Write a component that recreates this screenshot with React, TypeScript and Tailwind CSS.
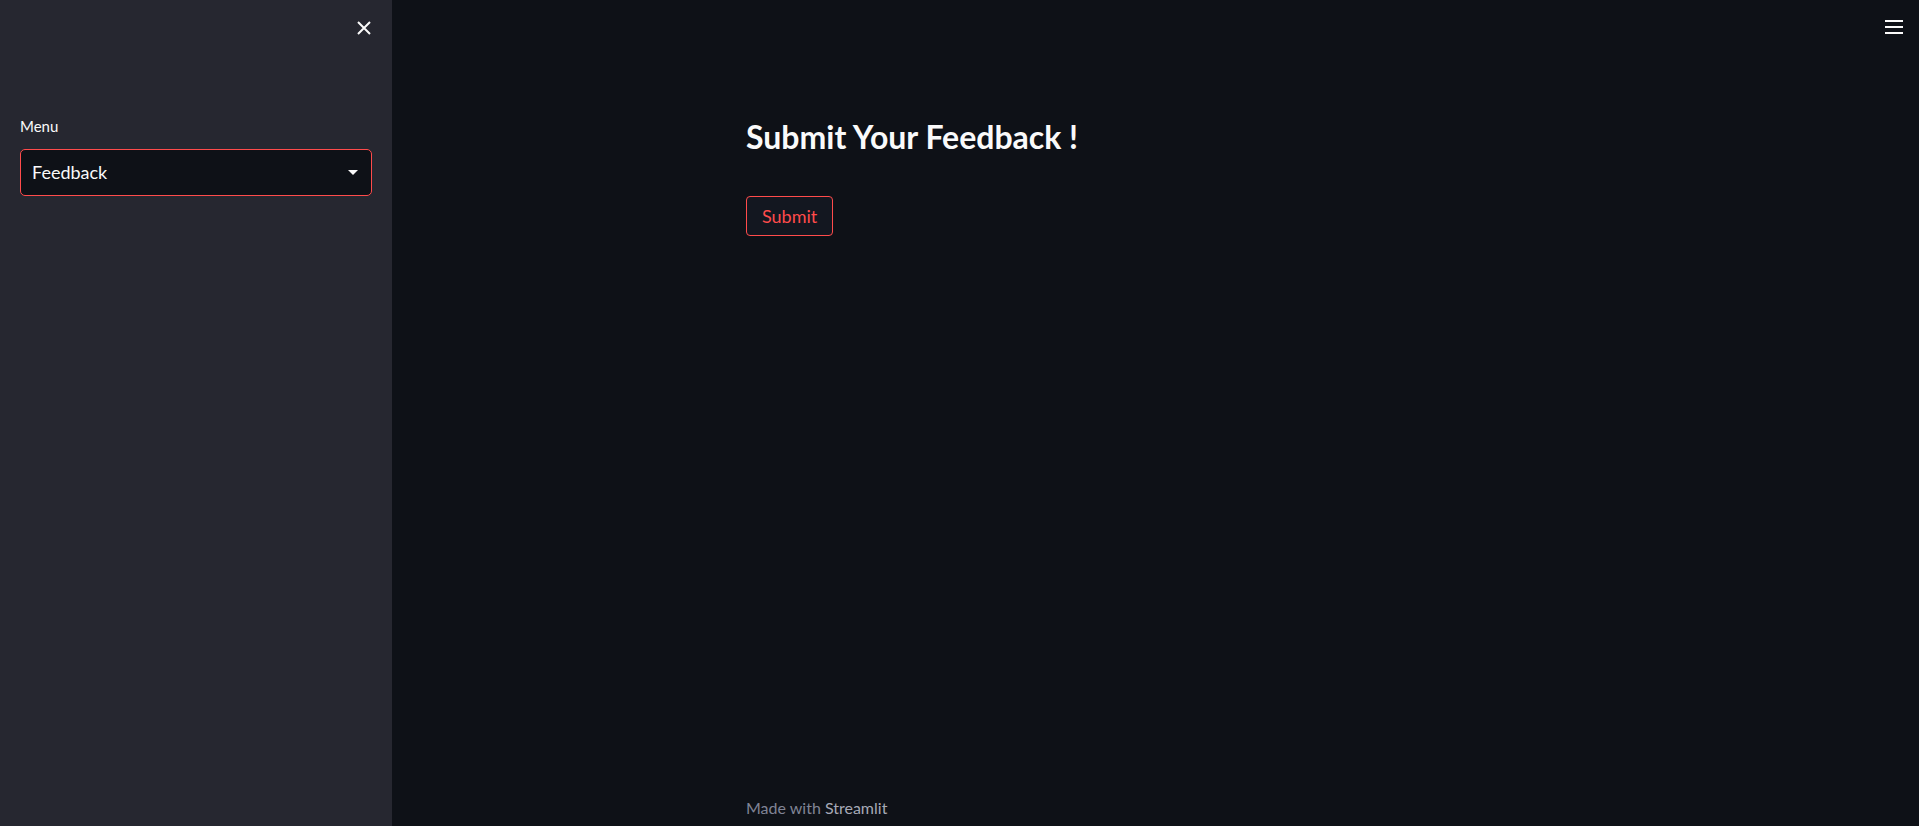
import React, { useState } from "react";

const font = { fontFamily: '"Lato", "Open Sans", sans-serif' };

const Sidebar = () => {
  const [page] = useState("Feedback");

  return (
    <aside className="w-[392px] shrink-0 h-full bg-[#262730] flex flex-col">
      <div className="flex justify-end pt-[21px] pr-[21px]">
        <button className="w-[14px] h-[14px] text-[#fafafa]" aria-label="Close sidebar">
          <svg viewBox="0 0 14 14" width="14" height="14" fill="none" stroke="currentColor" strokeWidth="2">
            <path d="M1 1 L13 13 M13 1 L1 13" />
          </svg>
        </button>
      </div>
      <div className="px-[20px] pt-[82px]">
        <label className="block text-[15px] leading-[18px] text-[#fafafa]">Menu</label>
        <div className="mt-[14px] h-[47px] w-[352px] rounded-[5px] border border-[#ff4b4b] bg-[#0e1117] flex items-center justify-between pl-[11px] pr-[13px]">
          <span className="text-[18px] text-[#fafafa]">{page}</span>
          <svg width="10" height="5" viewBox="0 0 10 5" className="text-[#fafafa]">
            <path d="M0 0 L10 0 L5 5 Z" fill="currentColor" />
          </svg>
        </div>
      </div>
    </aside>
  );
};

const App = () => {
  return (
    <div className="w-screen h-screen flex overflow-hidden" style={font}>
      <Sidebar />
      <main className="flex-1 h-full bg-[#0e1117] flex flex-col">
        <div className="flex justify-end pt-[20px] pr-[16px]">
          <button className="flex flex-col gap-[4px] w-[18px]" aria-label="Main menu">
            <span className="block h-[2px] w-[18px] bg-[#fafafa]" />
            <span className="block h-[2px] w-[18px] bg-[#fafafa]" />
            <span className="block h-[2px] w-[18px] bg-[#fafafa]" />
          </button>
        </div>
        <div className="w-[819px] mx-auto pt-[83px]">
          <h3 className="text-[32px] leading-[40px] font-bold text-[#fafafa]">Submit Your Feedback !</h3>
          <button className="mt-[39px] h-[40px] px-[15px] rounded-[4px] border border-[#ff4b4b] bg-[#131720] text-[18px] text-[#ff4b4b]">
            Submit
          </button>
        </div>
        <footer className="mt-auto w-[819px] mx-auto pb-[6px] text-[16px] leading-[24px]">
          <span className="text-[#808495]">Made with </span>
          <span className="text-[#a6a9b6]">Streamlit</span>
        </footer>
      </main>
    </div>
  );
};

export default App;
